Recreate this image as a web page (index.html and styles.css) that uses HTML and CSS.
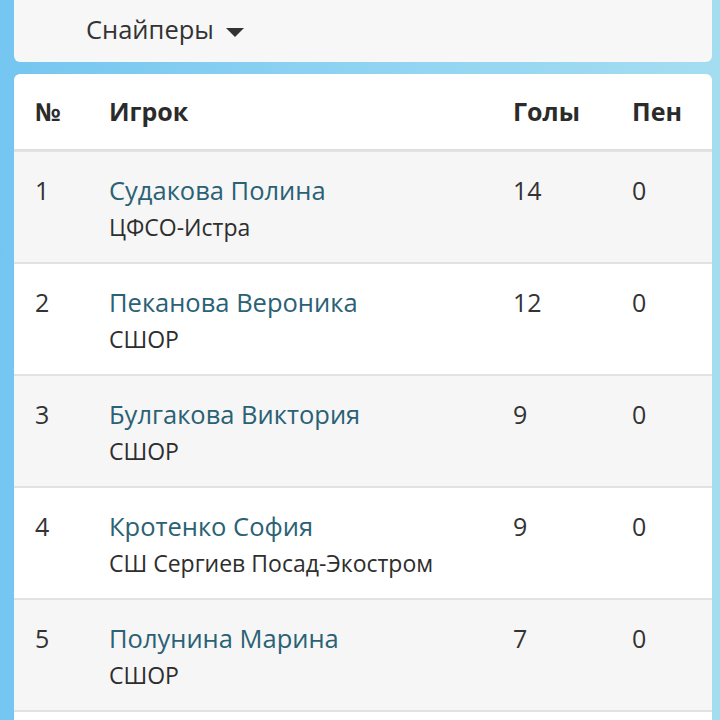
FILE: index.html
```html
<!DOCTYPE html>
<html lang="ru">
<head>
<meta charset="utf-8">
<link rel="stylesheet" href="styles.css">
</head>
<body>
<div class="page">
  <div class="filter">
    <span class="filter-label">Снайперы</span>
    <span class="caret"></span>
  </div>
  <div class="card">
    <div class="row head">
      <div>№</div>
      <div>Игрок</div>
      <div>Голы</div>
      <div>Пен</div>
    </div>
    <div class="row odd">
      <div>1</div>
      <div><a class="name">Судакова Полина</a><div class="team">ЦФСО-Истра</div></div>
      <div>14</div>
      <div>0</div>
    </div>
    <div class="row">
      <div>2</div>
      <div><a class="name">Пеканова Вероника</a><div class="team">СШОР</div></div>
      <div>12</div>
      <div>0</div>
    </div>
    <div class="row odd">
      <div>3</div>
      <div><a class="name">Булгакова Виктория</a><div class="team">СШОР</div></div>
      <div>9</div>
      <div>0</div>
    </div>
    <div class="row">
      <div>4</div>
      <div><a class="name">Кротенко София</a><div class="team">СШ Сергиев Посад-Экостром</div></div>
      <div>9</div>
      <div>0</div>
    </div>
    <div class="row odd">
      <div>5</div>
      <div><a class="name">Полунина Марина</a><div class="team">СШОР</div></div>
      <div>7</div>
      <div>0</div>
    </div>
    <div class="row empty"></div>
  </div>
</div>
</body>
</html>
```
FILE: styles.css
```css
html, body {
  margin: 0;
  padding: 0;
  height: 720px;
  overflow: hidden;
}
body {
  background: linear-gradient(90deg, #74c6f0 0%, #8fd3f2 50%, #a4ddf0 100%);
  font-family: "Open Sans", "Noto Sans", sans-serif;
  color: #333;
}
.page {
  padding: 0 8px 0 14px;
  display: flex;
  flex-direction: column;
  gap: 12px;
}
.filter {
  height: 62px;
  background: #f7f7f7;
  border-radius: 0 0 6px 6px;
  display: flex;
  align-items: center;
  padding-left: 72px;
  gap: 12px;
  font-size: 25.5px;
  color: #333;
  box-sizing: border-box;
}
.filter-label {
  line-height: 1;
  padding-bottom: 2px;
}
.caret {
  width: 0;
  height: 0;
  border-left: 9px solid transparent;
  border-right: 9px solid transparent;
  border-top: 9px solid #333;
  margin-top: 2px;
}
.card {
  background: #fff;
  border-radius: 6px 6px 0 0;
  overflow: hidden;
}
.row {
  display: grid;
  grid-template-columns: 74px 404px 119px 1fr;
  padding-left: 21px;
  font-size: 25px;
  line-height: 37px;
  border-top: 2px solid #e2e2e2;
  padding-top: 20px;
  height: 112px;
  box-sizing: border-box;
}
.row.head {
  border-top: none;
  font-weight: 700;
  height: 76px;
  padding-top: 19px;
  border-bottom: 1px solid #dcdcdc;
  color: #2b2b2b;
}
.row.odd {
  background: #f6f6f6;
}
.name {
  color: #2a6175;
  text-decoration: none;
  display: block;
  font-size: 25.5px;
}
.team {
  color: #2e2e2e;
  font-size: 23px;
}
```
